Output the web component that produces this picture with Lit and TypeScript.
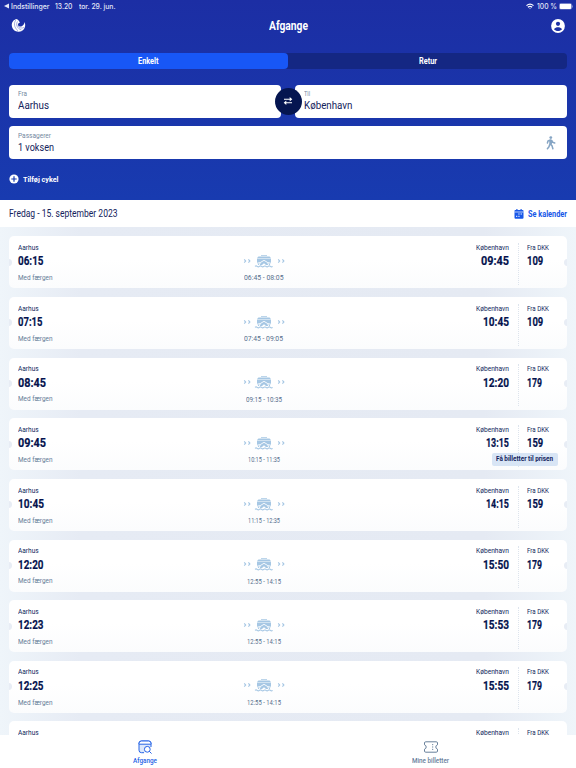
import { LitElement, html, css } from "lit";
import { customElement, property } from "lit/decorators.js";

/** A single line of text condensed or widened to a given width. */
@customElement("fit-text")
class FitText extends LitElement {
  @property({ type: Number }) w = 0;
  static styles = css`
    :host { display: block; white-space: nowrap; flex: none; }
    .line { display: inline-block; transform-origin: 0 50%; }
  `;
  render() {
    return html`<span class="line"><slot></slot></span>`;
  }
  updated() {
    const line = this.renderRoot.querySelector(".line") as HTMLElement;
    line.style.transform = "none";
    const natural = line.getBoundingClientRect().width;
    this.style.width = `${this.w}px`;
    if (natural) line.style.transform = `scaleX(${this.w / natural})`;
  }
}

interface Times {
  dep: string; depW: number;
  arr: string; arrW: number;
  price: string;
  ferry: string; ferryW: number;
}

interface Departure {
  times?: Times;
  offer?: boolean;
}

const departures: Departure[] = [
  { times: { dep: "06:15", depW: 25.5, arr: "09:45", arrW: 28, price: "109", ferry: "06:45 - 08:05", ferryW: 39.5 } },
  { times: { dep: "07:15", depW: 24.5, arr: "10:45", arrW: 26, price: "109", ferry: "07:45 - 09:05", ferryW: 39 } },
  { times: { dep: "08:45", depW: 28, arr: "12:20", arrW: 26, price: "179", ferry: "09:15 - 10:35", ferryW: 36 } },
  { times: { dep: "09:45", depW: 28, arr: "13:15", arrW: 23, price: "159", ferry: "10:15 - 11:35", ferryW: 32 }, offer: true },
  { times: { dep: "10:45", depW: 26, arr: "14:15", arrW: 23, price: "159", ferry: "11:15 - 12:35", ferryW: 32 } },
  { times: { dep: "12:20", depW: 25.5, arr: "15:50", arrW: 26, price: "179", ferry: "12:55 - 14:15", ferryW: 34 } },
  { times: { dep: "12:23", depW: 25.5, arr: "15:53", arrW: 26, price: "179", ferry: "12:55 - 14:15", ferryW: 34 } },
  { times: { dep: "12:25", depW: 25.5, arr: "15:55", arrW: 26, price: "179", ferry: "12:55 - 14:15", ferryW: 34 } },
  {},
];

const ferryIcon = html`<svg class="ferry" width="42" height="14" viewBox="0 0 42 14">
  <g fill="none" stroke="#a6c7e4" stroke-width="1.1">
    <path d="M1.200 5.400l1.500 1.600-1.500 1.600M5.400 5.400l1.500 1.600-1.500 1.600M35.200 5.400l1.500 1.600-1.500 1.600M39.400 5.400l1.500 1.600-1.500 1.600"/>
    <path d="M12 12.300q1.100-1 2.200 0t2.200 0 2.200 0 2.200 0 2.200 0 2.200 0 2.200 0 2.200 0" />
  </g>
  <path fill="#a6c7e4" d="M18 .9h6v.9h-6zM15.600 2.400h10.800q1 0 1.300 1.500H14.300q.3-1.500 1.300-1.500zM14 4.600h14v4l-1.300 2.500H15.300L14 8.600z"/>
  <path fill="none" stroke="#fff" stroke-width=".9" d="M14.200 9.200l3-.6 3.800-2.300 3.800 2.300 3 .6M17.300 8.600l-1 2.500M24.700 8.600l1 2.500"/>
  <path fill="#fff" d="M18.700 11.200l2.300-2 2.300 2z"/>
</svg>`;

@customElement("departure-card")
class DepartureCard extends LitElement {
  @property({ attribute: false }) item!: Departure;
  static styles = css`
    :host {
      display: block; position: relative; box-sizing: border-box; height: 52px; flex: none;
      padding: 6.700px 18px 0 9px; border-radius: 5px; overflow: hidden;
      background: linear-gradient(#fff 45%, #fbfcfd);
    }
    svg { display: block; flex: none; }
    .row { display: grid; grid-template-columns: 1fr 42px 1fr 9px 31px; }
    .from, .to, .price { display: flex; flex-direction: column; }
    .to { align-items: flex-end; }
    .price { padding-left: 9px; }
    .small { font-size: 7.400px; color: #101f5c; height: 9.500px; line-height: 10px; }
    .time { font: 700 12.700px/17px Roboto, sans-serif; color: #04134e; height: 19.700px; -webkit-text-stroke: .2px #04134e; }
    .muted { font-size: 7.400px; color: #647c97; line-height: 12px; }
    .mid { display: flex; flex-direction: column; align-items: center; padding-top: 11px; }
    .mid .muted { color: #566e8d; margin-top: 4.500px; }
    .divider { width: 0; height: 42px; margin-left: 8.500px; border-left: 1px dotted #dde4ed; }
    .notch { position: absolute; top: 22.500px; width: 7px; height: 7px; border-radius: 50%; background: #e8edf5; }
    .left { left: -3.600px; }
    .right { right: -3.600px; }
    .offer {
      position: absolute; right: 9px; top: 34.300px; height: 13px; width: 66.500px; border-radius: 2px;
      background: #d8e5f5; display: flex; align-items: center; justify-content: center;
      font-weight: 700; font-size: 7.400px; color: #14245e;
    }
    .offer fit-text { margin-top: -1px; }
  `;
  render() {
    const { times: t, offer } = this.item;
    return html`
      <div class="row">
        <div class="from">
          <fit-text class="small" w="20.7">Aarhus</fit-text>
          ${t ? html`<fit-text class="time" .w=${t.depW}>${t.dep}</fit-text>
          <fit-text class="muted" w="34.5">Med færgen</fit-text>` : ""}
        </div>
        <div class="mid">${t ? html`${ferryIcon}<fit-text class="muted" .w=${t.ferryW}>${t.ferry}</fit-text>` : ""}</div>
        <div class="to">
          <fit-text class="small" w="33">København</fit-text>
          ${t ? html`<fit-text class="time" .w=${t.arrW}>${t.arr}</fit-text>` : ""}
        </div>
        <div class="divider"></div>
        <div class="price">
          <fit-text class="small" w="22">Fra DKK</fit-text>
          ${t ? html`<fit-text class="time" .w=${t.price === "179" ? 15 : 16.3}>${t.price}</fit-text>` : ""}
        </div>
      </div>
      <span class="notch left"></span><span class="notch right"></span>
      ${offer ? html`<div class="offer"><fit-text w="57">Få billetter til prisen</fit-text></div>` : ""}
    `;
  }
}

@customElement("app-root")
class AppRoot extends LitElement {
  static styles = css`
    :host {
      display: flex; flex-direction: column; width: 576px; height: 768px; overflow: hidden;
      font-family: Roboto, "Noto Sans", sans-serif; color: #14235c; background: #fff;
    }
    svg { display: block; flex: none; }
    .top {
      height: 200px; box-sizing: border-box; flex: none; padding: 0 9px; color: #fff;
      background: linear-gradient(#1c2ea4, #183bb0);
    }
    .status { display: flex; height: 12px; align-items: center; margin: 0 -5px; font: 500 7.200px Inter, sans-serif; color: #e3e7f7; }
    .status .date { margin-left: 6px; }
    .status .right { margin-left: auto; margin-right: -1px; display: flex; gap: 2.500px; align-items: center; }
    .title { display: grid; grid-template-columns: 19px 1fr 19px; height: 27px; align-items: center; justify-items: center; font-weight: 700; font-size: 12px; }
    .tabs { display: grid; grid-template-columns: 1fr 1fr; height: 16px; margin-top: 14px; border-radius: 4px; background: #142783; font-weight: 700; font-size: 8.200px; }
    .tab { display: flex; align-items: center; justify-content: center; border-radius: 4px; }
    .active { background: #1857f6; }
    .places { display: grid; grid-template-columns: 272px 272px; gap: 14px; margin-top: 15.500px; position: relative; }
    .field { height: 33px; box-sizing: border-box; border-radius: 4px; background: #fff; padding: 4.500px 9px 0; color: #14235c; }
    .label { font-size: 7.400px; line-height: 10px; color: #7488a0; }
    .value { font-size: 11.200px; line-height: 13px; }
    .swap { position: absolute; left: 265.500px; top: 3px; width: 27px; height: 27px; border-radius: 50%; background: #051550; display: grid; place-items: center; }
    .pax { margin-top: 8.500px; display: flex; justify-content: space-between; padding-right: 11px; }
    .walk { margin-top: 5px; }
    .bike { display: flex; align-items: center; gap: 4px; height: 12px; margin-top: 14px; font-weight: 700; font-size: 8px; }
    .datebar { height: 27px; flex: none; display: flex; align-items: center; padding: 0 9px; font-size: 10.200px; }
    .calendar { margin-left: auto; display: flex; gap: 4px; align-items: center; color: #1857e8; font-size: 8.500px; font-weight: 700; }
    .list {
      flex: 1; min-height: 0; overflow: hidden; padding: 9.300px 9px 0; display: flex; flex-direction: column; gap: 8.650px;
      background: linear-gradient(90deg, #eff5fa, #e6ebf4 14%, #e5eaf3 84%, #eff5fa);
    }
    .nav { height: 33px; flex: none; display: grid; grid-template-columns: 290px 1fr; background: #fff; font-size: 7.700px; }
    .item { display: flex; flex-direction: column; align-items: center; padding-top: 5px; line-height: 10px; gap: 1.600px; color: #68809b; font-weight: 500; }
    .item.on { color: #2764e6; }
    .item.rest { padding-right: 5px; }
  `;
  render() {
    return html`
      <div class="top">
        <div class="status">
          <svg width="6.5" height="6" viewBox="0 0 6.500 6"><path fill="currentColor" d="M0 3L5 .6v4.800z"/></svg>
          <fit-text w="38.5">Indstillinger</fit-text>
          <fit-text class="date" w="17.5">13.20</fit-text>
          <fit-text class="date" w="36.5">tor. 29. jun.</fit-text>
          <div class="right">
            <svg width="8" height="7" viewBox="0 0 8 7" fill="none" stroke="#fff" stroke-width="1.200"><path d="M.5 2.600q3.500-3 7 0M1.900 4.300q2.100-1.800 4.200 0"/><path d="M3.200 5.300h1.600L4 6.300z" fill="#fff" stroke="none"/></svg>
            <fit-text w="20">100 %</fit-text>
            <svg width="14" height="7" viewBox="0 0 14 7"><rect x=".3" y=".3" width="12.400" height="6" rx="1.500" fill="none" stroke="#8f9bd8" stroke-width=".5"/><rect x=".7" y=".7" width="11.600" height="5.200" rx="1.200" fill="#fff"/><path d="M13.400 2.500v2" stroke="#8f9bd8" stroke-width=".8"/></svg>
          </div>
        </div>
        <div class="title">
          <svg width="15" height="15" viewBox="0 0 15 15">
            <path fill="#fff" d="M5.200 1C2.500 1.800.6 4.500.8 7.600c.3 3.800 3.300 6.400 7 6.200 3.700-.2 6.400-3.200 6.400-6.800 0-1-.2-2-.6-3-.2 2.200-1.500 3.900-3.400 4.400C8.300 8.800 6.900 8 7 6.500c.1-1 .9-1.600 1.800-1.400C8.400 2.900 7.200 1.500 5.200 1z"/>
            <path fill="none" stroke="#4f60c0" stroke-width=".5" d="M5 1.800C2.500 5 3 9.500 7 12.800M6.500 3.500C4.600 6.500 6 10.500 10.500 12M7 7.500c1 2.500 3.800 3.200 6 2"/>
          </svg>
          <fit-text w="39">Afgange</fit-text>
          <svg width="14" height="14" viewBox="0 0 14 14"><circle cx="7" cy="7" r="6.900" fill="#fff"/><circle cx="7" cy="4.800" r="2.100" fill="#1c30a5"/><path fill="#1c30a5" d="M3 10.200C4 8.600 5.500 8.200 7 8.200s3 .4 4 2C10 11.400 8.600 12 7 12s-3-.6-4-1.800z"/></svg>
        </div>
        <div class="tabs">
          <div class="tab active"><fit-text w="20.5">Enkelt</fit-text></div>
          <div class="tab"><fit-text w="18">Retur</fit-text></div>
        </div>
        <div class="places">
          <div class="field"><fit-text class="label" w="9">Fra</fit-text><fit-text class="value" w="31">Aarhus</fit-text></div>
          <div class="field"><fit-text class="label" w="6">Til</fit-text><fit-text class="value" w="48.5">København</fit-text></div>
          <div class="swap"><svg width="10" height="10" viewBox="0 0 10 10" stroke="#fff" stroke-width="1.100" fill="#fff"><path d="M1 3.200h6M3 6.800h6" /><path stroke="none" d="M6.700 1l2.600 2.200-2.600 2.200zM3.300 4.600L.7 6.800 3.300 9z"/></svg></div>
        </div>
        <div class="field pax">
          <div><fit-text class="label" w="33">Passagerer</fit-text><fit-text class="value" w="36">1 voksen</fit-text></div>
          <svg class="walk" width="10" height="14" viewBox="0 0 10 14"><circle cx="4.800" cy="1.600" r="1.400" fill="#86a5c4"/><path fill="none" stroke="#86a5c4" stroke-width="1.500" stroke-linecap="round" stroke-linejoin="round" d="M1.400 7l.6-2 2.400-1 1.300.4 1 1.900 2 .7M4.200 4.400L3.900 8l2.100 1.700.9 3M3.600 8.700l-.6 2-1.600 2M5.500 4.800l-.4 3.700"/></svg>
        </div>
        <div class="bike">
          <svg width="10" height="10" viewBox="0 0 10 10"><circle cx="5" cy="5" r="4.600" fill="#fff"/><path d="M5 2.300v5.400M2.300 5h5.400" stroke="#183aaf" stroke-width="1.200"/></svg>
          <fit-text w="35.500">Tilføj cykel</fit-text>
        </div>
      </div>
      <div class="datebar">
        <fit-text w="108.5">Fredag - 15. september 2023</fit-text>
        <div class="calendar">
          <svg width="10" height="10" viewBox="0 0 10 10"><path fill="currentColor" d="M1.300 1h1V0h1.200v1h3V0h1.200v1h1Q9.500 1 9.500 2v6.800q0 .9-1 .9H1.500q-1 0-1-.9V2q0-1 .8-1z"/><path stroke="#fff" d="M.5 3h9" stroke-width=".7"/><path stroke="#fff" stroke-width="1" stroke-dasharray="1.300 1" d="M4.300 5h4M2 7.300h4.500"/></svg>
          <fit-text w="39">Se kalender</fit-text>
        </div>
      </div>
      <div class="list">
        ${departures.map((d) => html`<departure-card .item=${d}></departure-card>`)}
      </div>
      <div class="nav">
        <div class="item on">
          <svg width="14" height="14" viewBox="0 0 14 14" fill="none" stroke="currentColor" stroke-width="1"><path fill="#dce8fb" d="M6 12.700H3.500q-2.500 0-2.500-2.500V3.200Q1 1 3.500 1h7Q13 1 13 3.200V7"/><path fill="#fff" d="M1 4.200V3.200Q1 1 3.500 1h7Q13 1 13 3.200v1z"/><circle cx="9.300" cy="9.300" r="2.900" fill="#fff"/><path d="M11.500 11.500l1.800 1.800" stroke-linecap="round"/></svg>
          <fit-text w="24">Afgange</fit-text>
        </div>
        <div class="item rest">
          <svg width="14" height="14" viewBox="0 0 14 14" fill="none" stroke="currentColor" stroke-width="1"><path d="M1.700 1.800h10.600q1.200 0 1.200 1.200v1.800q-1.700.6-1.700 2.200t1.700 2.200V11q0 1.200-1.200 1.200H1.700Q.5 12.200.5 11V9.200Q2.200 8.600 2.200 7T.5 4.800V3q0-1.200 1.200-1.200z"/><path d="M8.700 4v6.200" stroke-dasharray="1.200 1.200"/></svg>
          <fit-text w="37">Mine billetter</fit-text>
        </div>
      </div>
    `;
  }
}
